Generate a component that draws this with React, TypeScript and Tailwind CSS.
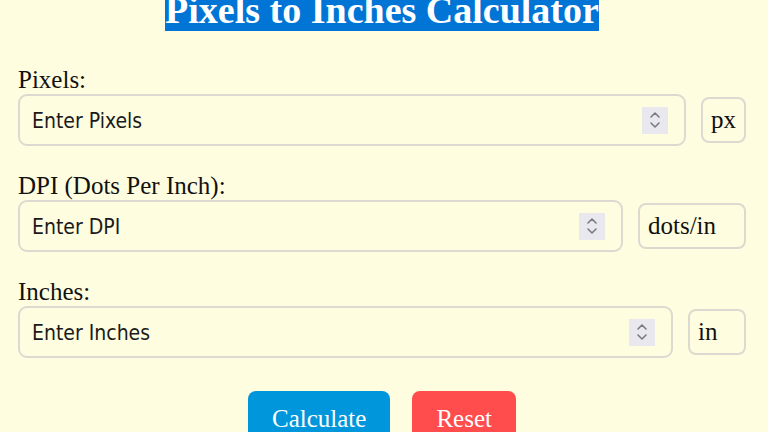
import React from 'react';

const fields = [
  { label: 'Pixels:', placeholder: 'Enter Pixels', unit: 'px', unitW: 'w-[45px]' },
  { label: 'DPI (Dots Per Inch):', placeholder: 'Enter DPI', unit: 'dots/in', unitW: 'w-[108px]' },
  { label: 'Inches:', placeholder: 'Enter Inches', unit: 'in', unitW: 'w-[58px]' },
];

function Spinner() {
  return (
    <div className="flex h-[27px] w-[26px] shrink-0 items-center justify-center bg-[#e9e8ee]">
      <svg width="12" height="20" viewBox="0 0 12 20" fill="none" stroke="#7a7a80" strokeWidth="1.6" strokeLinecap="round" strokeLinejoin="round">
        <path d="M2 7 L6 3 L10 7" />
        <path d="M2 13 L6 17 L10 13" />
      </svg>
    </div>
  );
}

export default function App() {
  return (
    <div className="min-h-screen w-full overflow-hidden bg-[#fffddf] pl-[18px] pr-[22px]" style={{ height: 432 }}>
      {/* title */}
      <h1 className="-mt-[12px] text-center font-['Liberation_Serif',serif] text-[38px] font-bold leading-[44px] text-white">
        <span className="bg-[#0075d5]">Pixels to Inches Calculator</span>
      </h1>

      <div className="mt-[33px] flex flex-col gap-[25px]">
        {fields.map((f) => (
          <div key={f.label} className="flex flex-col">
            <label className="font-['Liberation_Serif',serif] text-[25px] leading-[29px] text-[#111]">{f.label}</label>
            <div className="flex items-center gap-[15px]">
              <div className="flex h-[52px] flex-1 items-center rounded-[9px] border-2 border-[#dcdad0] pl-[12px] pr-[16px]">
                <input
                  type="text"
                  placeholder={f.placeholder}
                  className="min-w-0 flex-1 bg-transparent pt-[4px] font-['DejaVu_Sans_Condensed','DejaVu_Sans',sans-serif] text-[21px] text-[#111] outline-none placeholder:text-[#1a1a1a]"
                />
                <Spinner />
              </div>
              <div
                className={`${f.unitW} flex h-[46px] shrink-0 items-center rounded-[8px] border-2 border-[#dcdad0] pl-[8px] font-['Liberation_Serif',serif] text-[25px] text-[#111]`}
              >
                {f.unit}
              </div>
            </div>
          </div>
        ))}
      </div>

      {/* buttons */}
      <div className="mt-[33px] flex justify-center gap-[22px]">
        <button className="h-[52px] rounded-[8px] bg-[#0096db] px-6 pb-1 pt-2 font-['Liberation_Serif',serif] text-[25px] text-white">
          Calculate
        </button>
        <button className="h-[52px] rounded-[8px] bg-[#ff4c4c] px-6 pb-1 pt-2 font-['Liberation_Serif',serif] text-[25px] text-white">
          Reset
        </button>
      </div>
    </div>
  );
}
